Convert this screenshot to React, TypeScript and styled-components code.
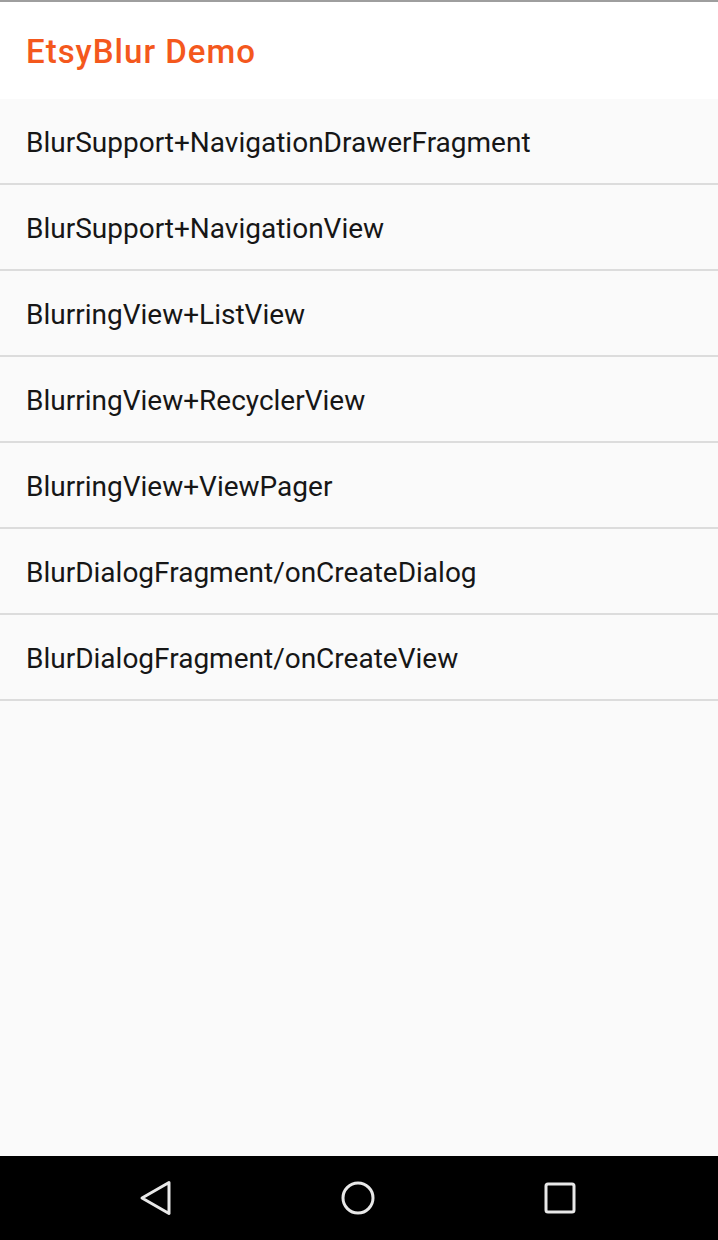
import React from "react";
import styled, { createGlobalStyle } from "styled-components";

const Global = createGlobalStyle`
  html, body { margin: 0; padding: 0; }
  body { font-family: Roboto, "Noto Sans", sans-serif; background: #fafafa; }
`;

const Screen = styled.div`
  width: 718px;
  height: 1240px;
  display: flex;
  flex-direction: column;
  background: #fafafa;
  overflow: hidden;
`;

const StatusEdge = styled.div`
  height: 2px;
  background: #9e9e9e;
`;

const Toolbar = styled.header`
  height: 97px;
  background: #ffffff;
  display: flex;
  align-items: center;
  padding-left: 26px;
  box-sizing: border-box;
`;

const Title = styled.h1`
  margin: 0;
  font-family: Roboto, sans-serif;
  font-weight: 500;
  font-size: 33px;
  color: #f4581d;
  letter-spacing: 1px;
  position: relative;
  top: 1px;
`;

const List = styled.ul`
  list-style: none;
  margin: 0;
  padding: 0;
  flex: 1;
`;

const Row = styled.li`
  height: 86px;
  box-sizing: border-box;
  border-bottom: 2px solid #dcdcdc;
  display: flex;
  align-items: center;
  padding-left: 26px;
  padding-top: 2px;
  font-family: Roboto, sans-serif;
  font-size: 28px;
  color: #161616;
`;

const NavBar = styled.nav`
  height: 84px;
  background: #000;
  display: flex;
  align-items: center;
  justify-content: center;
  gap: 142px;
  padding-right: 2px;
`;

const NavButton = styled.div`
  width: 60px;
  height: 60px;
  display: flex;
  align-items: center;
  justify-content: center;
`;

const items = [
  "BlurSupport+NavigationDrawerFragment",
  "BlurSupport+NavigationView",
  "BlurringView+ListView",
  "BlurringView+RecyclerView",
  "BlurringView+ViewPager",
  "BlurDialogFragment/onCreateDialog",
  "BlurDialogFragment/onCreateView",
];

export default function App() {
  return (
    <Screen>
      <Global />
      <StatusEdge />
      <Toolbar>
        <Title>EtsyBlur Demo</Title>
      </Toolbar>
      <List>
        {items.map((t) => (
          <Row key={t}>{t}</Row>
        ))}
      </List>
      <NavBar>
        <NavButton>
          <svg width="34" height="36" viewBox="0 0 34 36">
            <path d="M30 2.5 L3 18 L30 33.5 Z" fill="none" stroke="#e8e8e8" strokeWidth="3" strokeLinejoin="round" />
          </svg>
        </NavButton>
        <NavButton>
          <svg width="36" height="36" viewBox="0 0 36 36">
            <circle cx="18" cy="18" r="15" fill="none" stroke="#e8e8e8" strokeWidth="3" />
          </svg>
        </NavButton>
        <NavButton>
          <svg width="32" height="32" viewBox="0 0 32 32">
            <rect x="2" y="2" width="28" height="28" rx="2" fill="none" stroke="#e8e8e8" strokeWidth="3" />
          </svg>
        </NavButton>
      </NavBar>
    </Screen>
  );
}
